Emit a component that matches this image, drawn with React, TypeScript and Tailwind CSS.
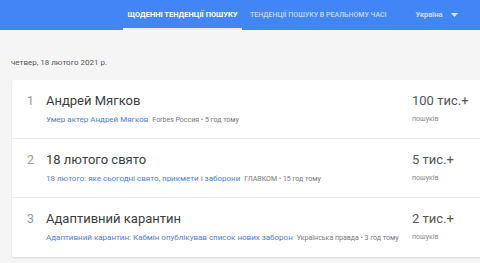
const items = [
  {
    n: 1,
    title: "Андрей Мягков",
    link: "Умер актер Андрей Мягков",
    source: "Forbes Россия • 5 год тому",
    count: "100 тис.+",
  },
  {
    n: 2,
    title: "18 лютого свято",
    link: "18 лютого: яке сьогодні свято, прикмети і заборони",
    source: "ГЛАВКОМ • 15 год тому",
    count: "5 тис.+",
  },
  {
    n: 3,
    title: "Адаптивний карантин",
    link: "Адаптивний карантин: Кабмін опублікував список нових заборон",
    source: "Українська правда • 3 год тому",
    count: "2 тис.+",
  },
]

const TrendRow = ({ item, last }: { item: (typeof items)[number]; last: boolean }) => {
  return (
    <div className={`h-[59px] flex items-start pt-[13px] ${last ? "" : "border-b border-[#ebebeb]"}`}>
      <div className="w-[34px] text-right pr-[12px] text-[13px] leading-[16px] text-[#9a9a9a]">{item.n}</div>
      <div className="w-[366px] flex flex-col">
        <div className="text-[13px] leading-[16px] text-[#3c3c3c]">{item.title}</div>
        <div className="mt-[5px] flex items-baseline whitespace-nowrap">
          <span className="text-[8px] text-[#4a80e0]">{item.link}</span>
          <span className="ml-[4px] text-[7px] text-[#777]">{item.source}</span>
        </div>
      </div>
      <div className="flex flex-col">
        <div className="text-[13px] leading-[16px] text-[#555]">{item.count}</div>
        <div className="mt-[5px] text-[7px] text-[#888]">пошуків</div>
      </div>
    </div>
  )
}

const App = () => {
  return (
    <div className="w-[480px] h-[263px] bg-[#f5f5f5] overflow-hidden" style={{ fontFamily: "Roboto, 'Liberation Sans', sans-serif" }}>
      <header className="h-[30px] bg-[#4285f4] flex items-stretch pl-[123px]">
        <div className="w-[119px] flex items-center justify-center border-b-2 border-[#e8effd] text-[7.5px] font-bold text-white pt-[2px]">
          ЩОДЕННІ ТЕНДЕНЦІЇ ПОШУКУ
        </div>
        <div className="ml-[8px] flex items-center text-[7px] font-medium text-white/70">
          ТЕНДЕНЦІЇ ПОШУКУ В РЕАЛЬНОМУ ЧАСІ
        </div>
        <div className="ml-[29px] flex items-center text-[7.5px] font-medium text-white/80">
          Україна
          <svg className="ml-[8px]" width="7" height="4" viewBox="0 0 7 4">
            <path d="M0 0 L7 0 L3.5 4 Z" fill="rgba(255,255,255,0.85)" />
          </svg>
        </div>
      </header>
      <div className="pl-[11px] pt-[28px] text-[8px] leading-[10px] text-[#555]">четвер, 18 лютого 2021 р.</div>
      <div className="ml-[12px] mt-[12px] w-[480px] bg-white rounded-[2px] shadow-[0_1px_2px_rgba(0,0,0,0.12)]">
        {items.map((it, i) => (
          <TrendRow key={i} item={it} last={i === items.length - 1} />
        ))}
      </div>
    </div>
  )
}

export default App
